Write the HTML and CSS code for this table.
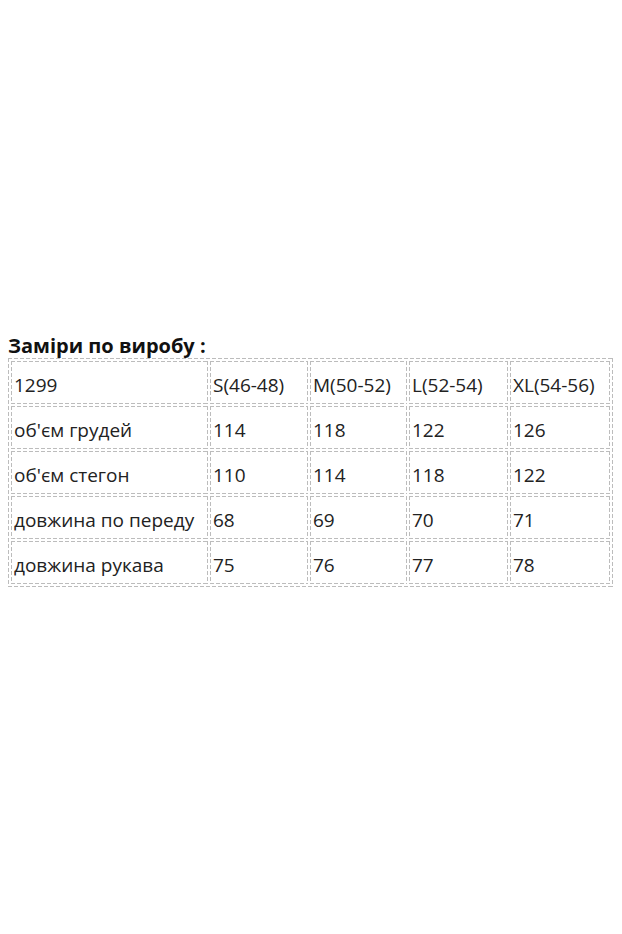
FILE: index.html
```html
<!DOCTYPE html>
<html lang="uk">
<head>
<meta charset="utf-8">
<title>Заміри по виробу</title>
<link rel="stylesheet" href="styles.css">
</head>
<body>
<div class="page">
  <h3 class="title">Заміри по виробу :</h3>
  <table class="sizes">
    <tr><td class="c1">1299</td><td class="c2">S(46-48)</td><td class="c3">M(50-52)</td><td class="c4">L(52-54)</td><td class="c5">XL(54-56)</td></tr>
    <tr><td class="c1">об'єм грудей</td><td class="c2">114</td><td class="c3">118</td><td class="c4">122</td><td class="c5">126</td></tr>
    <tr><td class="c1">об'єм стегон</td><td class="c2">110</td><td class="c3">114</td><td class="c4">118</td><td class="c5">122</td></tr>
    <tr><td class="c1">довжина по переду</td><td class="c2">68</td><td class="c3">69</td><td class="c4">70</td><td class="c5">71</td></tr>
    <tr><td class="c1">довжина рукава</td><td class="c2">75</td><td class="c3">76</td><td class="c4">77</td><td class="c5">78</td></tr>
  </table>
</div>
</body>
</html>
```
FILE: styles.css
```css
html, body {
  margin: 0;
  padding: 0;
  background: #fff;
}
.page {
  padding: 333px 0 0 8px;
  font-family: "Open Sans", "Noto Sans", sans-serif;
  color: #222;
}
.title {
  margin: 0;
  font-size: 20px;
  line-height: 25px;
  font-weight: 700;
  color: #111;
}
.sizes,
.sizes td {
  background:
    repeating-linear-gradient(to right, #bcbcbc 0 4px, transparent 4px 6px) left top / 100% 1px no-repeat,
    repeating-linear-gradient(to right, #bcbcbc 0 4px, transparent 4px 6px) left bottom / 100% 1px no-repeat,
    repeating-linear-gradient(to bottom, #bcbcbc 0 4px, transparent 4px 6px) left top / 1px 100% no-repeat,
    repeating-linear-gradient(to bottom, #bcbcbc 0 4px, transparent 4px 6px) right top / 1px 100% no-repeat;
}
.sizes {
  border: none;
  padding: 1px;
  border-spacing: 2px;
  table-layout: fixed;
  width: 605px;
  font-size: 19px;
}
.sizes td {
  box-sizing: border-box;
  border: none;
  height: 43px;
  padding: 4px 3px 0;
  vertical-align: middle;
  line-height: 22px;
  white-space: nowrap;
  overflow: hidden;
}
.c1 { width: 197px; }
.c2 { width: 98px; }
.c3 { width: 97px; }
.c4 { width: 99px; }
.c5 { width: 100px; }
```
